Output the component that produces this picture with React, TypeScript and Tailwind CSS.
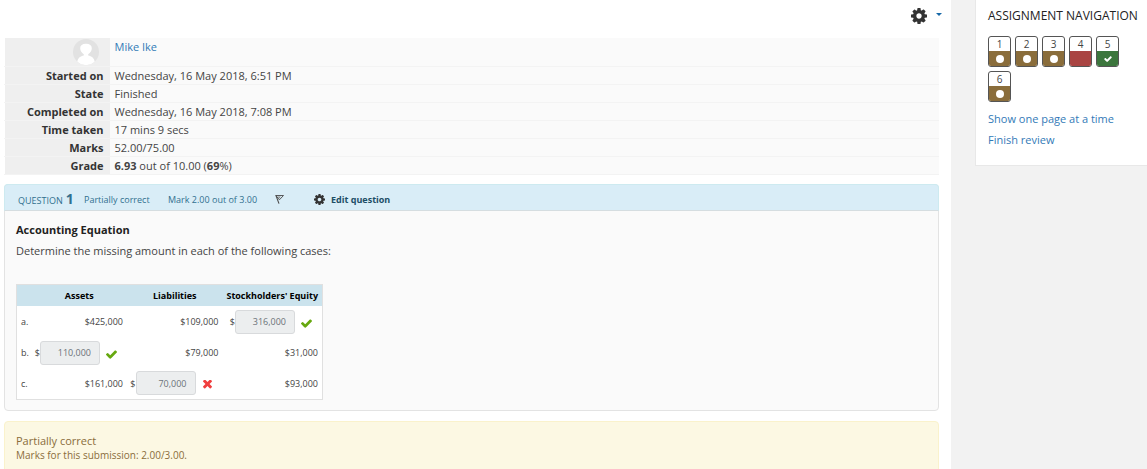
import React from "react";

type IconProps = { className?: string };

function Gear({ className }: IconProps) {
  return (
    <svg viewBox="128 128 1536 1536" fill="currentColor" className={className} aria-hidden="true">
      <path d="M1152 896q0-106-75-181t-181-75-181 75-75 181 75 181 181 75 181-75 75-181zm512-109v222q0 12-8 23t-20 13l-185 28q-19 54-39 91 35 50 107 138 10 12 10 25t-9 23q-27 37-99 108t-94 71q-12 0-26-9l-138-108q-44 23-91 38-16 136-29 186-7 28-36 28h-222q-14 0-24.5-8.5t-11.5-21.5l-28-184q-49-16-90-37l-141 107q-10 9-25 9-14 0-25-11-126-114-165-168-7-10-7-23 0-12 8-23 15-21 51-66.5t54-70.5q-27-50-41-99l-183-27q-13-2-21-12.5t-8-23.5v-222q0-12 8-23t19-13l186-28q14-46 39-92-40-57-107-138-10-12-10-24 0-10 9-23 26-36 98.5-107.5t94.5-71.5q13 0 26 10l138 107q44-23 91-38 16-136 29-186 7-28 36-28h222q14 0 24.5 8.5t11.5 21.5l28 184q49 16 90 37l142-107q9-9 24-9 13 0 25 10 129 119 165 170 7 8 7 22 0 12-8 23-15 21-51 66.5t-54 70.5q26 50 41 98l183 28q13 2 21 12.5t8 23.5z" />
    </svg>
  );
}

function Check({ className }: IconProps) {
  return (
    <svg viewBox="120 300 1552 1230" fill="currentColor" className={className} aria-hidden="true">
      <path d="M1671 566q0 40-28 68l-724 724-136 136q-28 28-68 28t-68-28l-136-136-362-362q-28-28-28-68t28-68l136-136q28-28 68-28t68 28l294 295 656-657q28-28 68-28t68 28l136 136q28 28 28 68z" />
    </svg>
  );
}

function Cross({ className }: IconProps) {
  return (
    <svg viewBox="300 430 1192 1192" fill="currentColor" className={className} aria-hidden="true">
      <path d="M1490 1322q0 40-28 68l-136 136q-28 28-68 28t-68-28l-294-294-294 294q-28 28-68 28t-68-28l-136-136q-28-28-28-68t28-68l294-294-294-294q-28-28-28-68t28-68l136-136q28-28 68-28t68 28l294 294 294-294q28-28 68-28t68 28l136 136q28 28 28 68t-28 68l-294 294 294 294q28 28 28 68z" />
    </svg>
  );
}

function Flag() {
  return (
    <svg viewBox="0 0 10 10" className="h-[10px] w-[10px]" fill="none" stroke="#4a4a4a" aria-hidden="true">
      <path d="M0.5 1.5H8.5L4.4 5.8L1 1.6" strokeWidth="0.9" />
      <path d="M1 1.6L4 9.6" strokeWidth="1.1" />
      <path d="M2.6 2.6H5.8L4.2 4.6Z" fill="#8a8a8a" stroke="none" />
    </svg>
  );
}

function Avatar() {
  return (
    <svg viewBox="0 0 26 26" className="h-[26px] w-[26px]" role="img" aria-label="Picture of Mike Ike">
      <circle cx="13" cy="13" r="13" fill="#e2e2e2" />
      <path d="M4.3 22.7C5 18.8 7.5 17.3 10.8 16.6V15.2C8.5 13.8 7.2 11.6 7.2 9.2C7.2 6.4 9.2 4.8 13 4.8S18.8 6.4 18.8 9.2C18.8 11.6 17.5 13.8 15.2 15.2V16.6C18.5 17.3 21 18.8 21.7 22.7A13 13 0 0 1 4.3 22.7Z" fill="#fff" />
    </svg>
  );
}

const summary: [string, React.ReactNode][] = [
  ["Started on", "Wednesday, 16 May 2018, 6:51 PM"],
  ["State", "Finished"],
  ["Completed on", "Wednesday, 16 May 2018, 7:08 PM"],
  ["Time taken", "17 mins 9 secs"],
  ["Marks", "52.00/75.00"],
  ["Grade", <><b>6.93</b> out of 10.00 (<b>69</b>%)</>],
];

type Cell = string | { answer: string; correct: boolean };

const rows: { label: string; cells: Cell[] }[] = [
  { label: "a.", cells: ["$425,000", "$109,000", { answer: "316,000", correct: true }] },
  { label: "b.", cells: [{ answer: "110,000", correct: true }, "$79,000", "$31,000"] },
  { label: "c.", cells: ["$161,000", { answer: "70,000", correct: false }, "$93,000"] },
];

const columns = ["Assets", "Liabilities", "Stockholders' Equity"];

function Answer({ answer, correct, name }: { answer: string; correct: boolean; name: string }) {
  return (
    <div className="flex items-center justify-end pr-[6px]">
      <label className="flex items-center">
        $
        <input
          aria-label={name}
          readOnly
          defaultValue={answer}
          className="h-6 w-[60px] rounded-[3px] border border-[#d8dadc] bg-[#eceeef] pr-2 text-right text-[#6b7278] outline-none"
        />
      </label>
      <span className="ml-[6px] flex w-[11px] justify-center pt-[3px]">
        {correct ? <Check className="h-[9px] w-[11px] text-[#66a80f]" /> : <Cross className="h-[9px] w-[9px] text-[#f03e3e]" />}
      </span>
    </div>
  );
}

type State = "partial" | "wrong" | "right";
const states: State[] = ["partial", "partial", "partial", "wrong", "right", "partial"];
const stateColor: Record<State, string> = {
  partial: "bg-[#8a6d3b]",
  wrong: "bg-[#a94442]",
  right: "bg-[#3c763d]",
};

export default function App() {
  return (
    <div className="flex min-h-screen gap-6 overflow-hidden bg-[#f2f2f2] font-['Open_Sans',sans-serif] text-[11px] leading-[17px] text-[#444]">
      <main className="min-w-0 flex-1 bg-white pr-3 pl-1">
        <div className="flex h-[38px] items-start justify-end pt-2">
          <button aria-label="Actions" className="-mr-[3px] flex items-center gap-[9px]">
            <Gear className="h-4 w-4 text-[#333]" />
            <svg viewBox="0 0 6 3" className="mb-[3px] h-[3px] w-[6px]" fill="#1769a8" aria-hidden="true">
              <path d="M0 0H6L3 3Z" />
            </svg>
          </button>
        </div>

        <table className="w-full border-collapse border-l border-white bg-[#fafafa]">
          <tbody>
            <tr className="h-7 border-b border-[#f3f3f3]">
              <th className="w-[105px] bg-[#efefef] pr-[11px] align-top">
                <div className="flex justify-end pt-px"><Avatar /></div>
              </th>
              <td className="pl-[5px] align-top">
                <a href="#profile" className="text-[#337ab7]">Mike Ike</a>
              </td>
            </tr>
            {summary.map(([label, value]) => (
              <tr key={label} className="h-[18px] border-b border-[#f3f3f3]">
                <th className="bg-[#efefef] pr-[6px] text-right font-bold text-[#333]">{label}</th>
                <td className="pl-[5px]">{value}</td>
              </tr>
            ))}
          </tbody>
        </table>

        <section className="mt-[9px] rounded border border-[#e3e3e3] bg-[#fafafa]">
          <header className="-mx-px -mt-px flex h-[27px] items-center rounded-t border border-[#cdeaf0] border-b-[#d5dde0] bg-[#d9edf7] pt-1 pl-[13px] text-[9px] text-[#31708f]">
            <h3 className="flex w-[66px] items-baseline gap-[3px]">
              QUESTION <b className="text-[14px]">1</b>
            </h3>
            <span className="w-[84px]">Partially correct</span>
            <span className="w-[107px]">Mark 2.00 out of 3.00</span>
            <button aria-label="Flag question" className="w-[39px]"><Flag /></button>
            <a href="#edit" className="flex items-center gap-[6px] font-bold text-[#1d4e66]">
              <Gear className="h-[11px] w-[11px] text-[#333]" />
              Edit question
            </a>
          </header>
          <div className="px-[11px] py-[10px]">
            <h4 className="font-bold text-[#222]">Accounting Equation</h4>
            <p className="mt-1">Determine the missing amount in each of the following cases:</p>
            <table className="mt-[25px] w-[307px] table-fixed border border-[#e0e0e0] bg-white text-[9px]">
              <thead>
                <tr className="h-[22px] bg-[#cbe3ed] text-black">
                  <th className="w-[15px]" />
                  {columns.map((c, i) => (
                    <th key={c} className={i === 2 ? "w-[100px] whitespace-nowrap font-bold" : "font-bold"}>{c}</th>
                  ))}
                </tr>
              </thead>
              <tbody>
                {rows.map((row) => (
                  <tr key={row.label} className="h-[31px]">
                    <td className="pl-1">{row.label}</td>
                    {row.cells.map((cell, i) => (
                      <td key={i} className="pr-1 text-right">
                        {typeof cell === "string" ? cell : <Answer {...cell} name={`${row.label} ${columns[i]}`} />}
                      </td>
                    ))}
                  </tr>
                ))}
              </tbody>
            </table>
          </div>
        </section>

        <section className="mt-[10px] rounded border border-[#faf2cc] bg-[#fcf8e3] px-[11px] pt-[10px] pb-3 text-[#8a6d3b]">
          <p>Partially correct</p>
          <p className="text-[10px] leading-[13px]">Marks for this submission: 2.00/3.00.</p>
        </section>
      </main>

      <aside className="w-[172px] shrink-0 self-start border-b border-l border-[#e8e8e8] bg-white pt-[7px] pb-[17px] pl-3">
        <h2 className="text-[12px] whitespace-nowrap text-[#222]">ASSIGNMENT NAVIGATION</h2>
        <nav className="mt-3 grid w-[131px] grid-cols-5 gap-1">
          {states.map((s, i) => (
            <a
              key={i}
              href={`#question-${i + 1}`}
              className="flex h-[31px] w-[23px] flex-col overflow-hidden rounded-[3px] border border-[#555] bg-white text-center text-[10px] leading-[14px]"
            >
              <span className="h-[14px]">{i + 1}</span>
              <span className={`flex flex-1 items-center justify-center ${stateColor[s]}`}>
                {s === "partial" && <span className="h-2 w-2 rounded-full bg-white" />}
                {s === "right" && <Check className="h-[6px] w-2 text-white" />}
              </span>
            </a>
          ))}
        </nav>
        <a href="#all" className="mt-2 block text-[#337ab7]">Show one page at a time</a>
        <a href="#finish" className="mt-1 block text-[#337ab7]">Finish review</a>
      </aside>
    </div>
  );
}
